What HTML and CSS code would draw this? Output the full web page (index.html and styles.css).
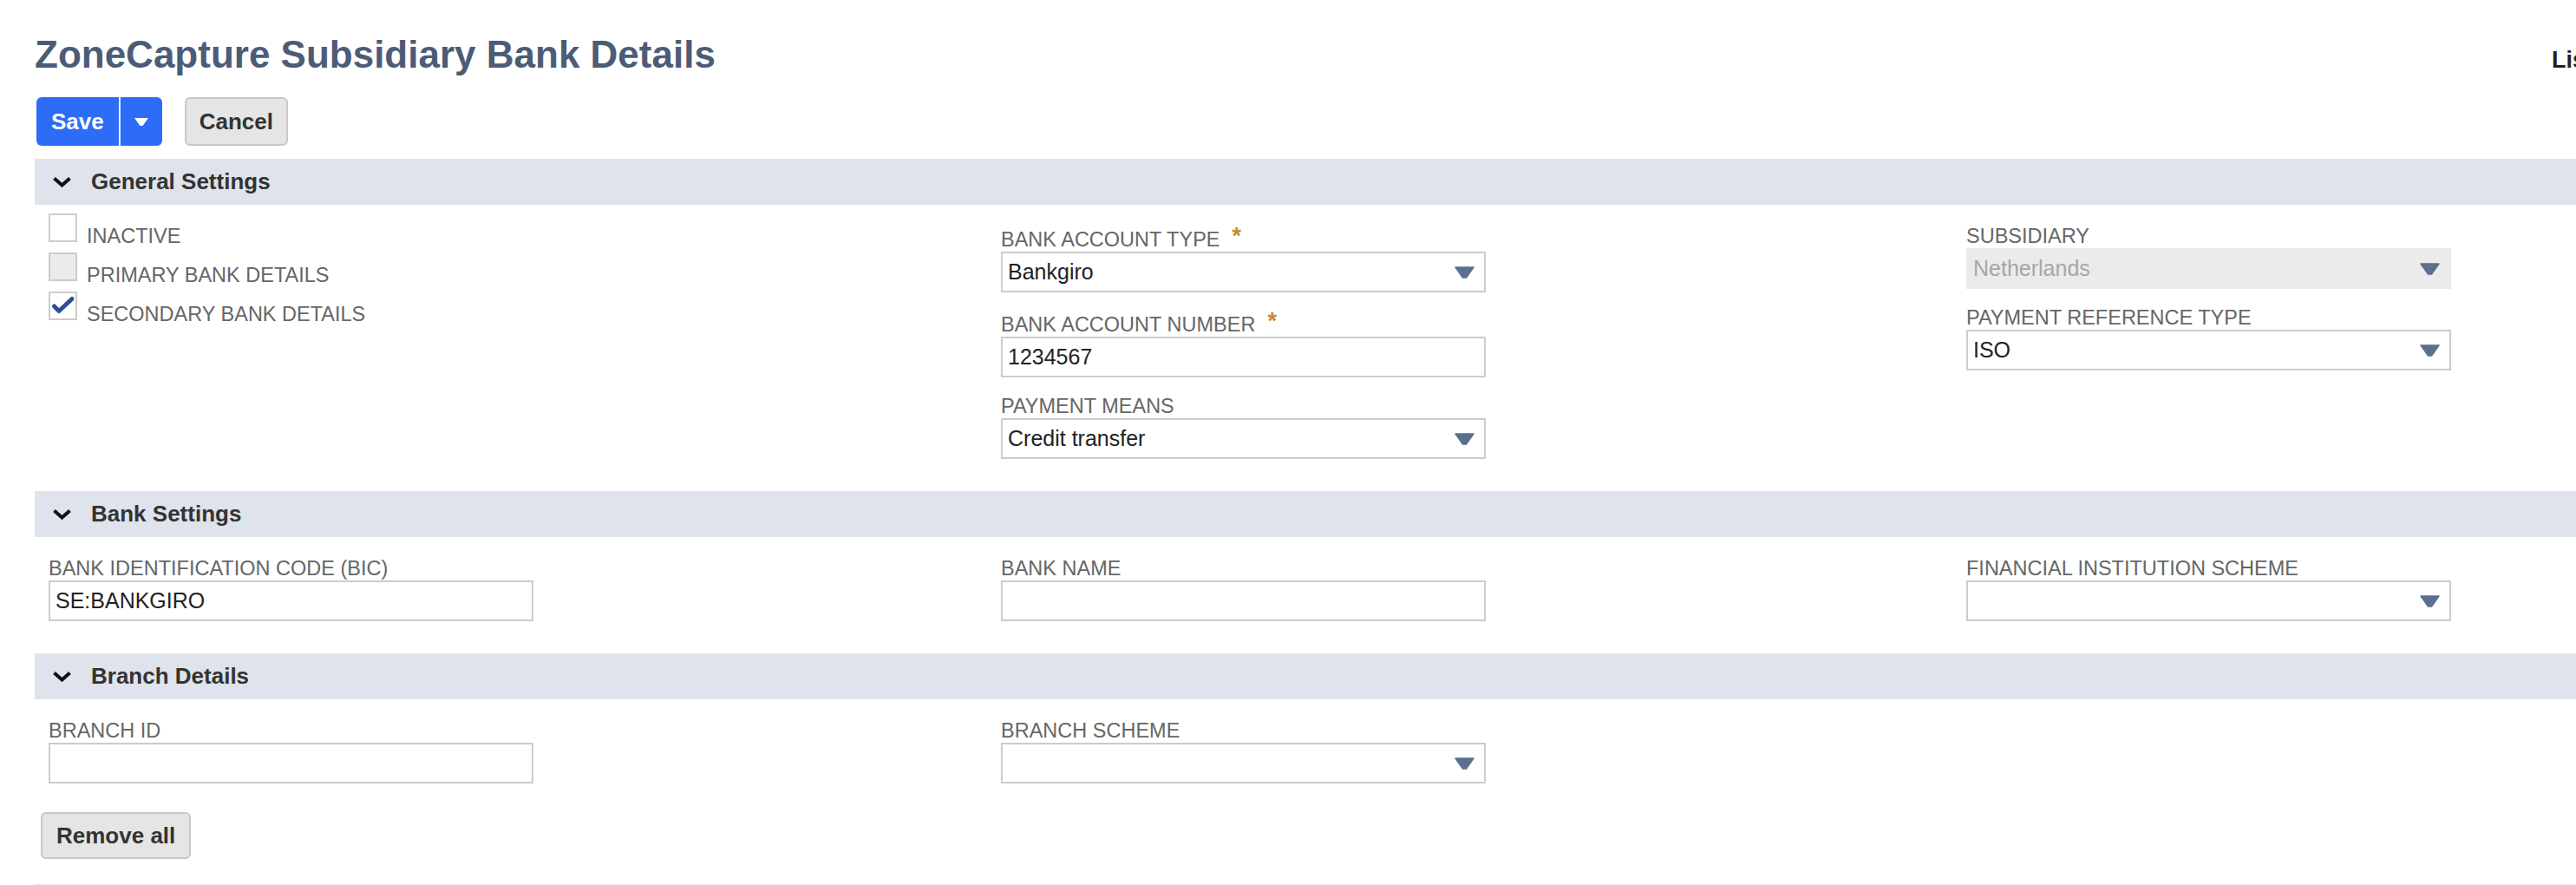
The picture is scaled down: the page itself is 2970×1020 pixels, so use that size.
FILE: index.html
```html
<!DOCTYPE html>
<html lang="en">
  <head>
    <meta charset="UTF-8" />
    <meta name="viewport" content="width=device-width, initial-scale=1.0" />
    <title>ZoneCapture Subsidiary Bank Details</title>
    <link rel="stylesheet" href="styles.css">
  </head>
  <body>
    <div class="page">
      <div class="page-header">
        <h1 class="page-title">ZoneCapture Subsidiary Bank Details</h1>
        <a class="header-link">List</a>
      </div>

      <div class="toolbar">
        <div class="btn-split">
          <button class="btn btn-primary">Save</button>
          <button class="btn btn-primary btn-menu">
            <svg width="16" height="9" viewBox="0 0 16 9"><path d="M0 0H16L9.5 9H6.5Z" fill="#fff"/></svg>
          </button>
        </div>
        <button class="btn">Cancel</button>
      </div>

      <div class="section">
        <div class="section-head">
          <svg class="chevron" width="23" height="13" viewBox="0 0 23 13"><path d="M2.5 2.5L11.5 10.5L20.5 2.5" fill="none" stroke="#111" stroke-width="4"/></svg>
          General Settings
        </div>
        <div class="section-body">
          <div class="col checks">
            <div class="check-row">
              <span class="checkbox"></span>
              <span class="check-label">INACTIVE</span>
            </div>
            <div class="check-row">
              <span class="checkbox checkbox-disabled"></span>
              <span class="check-label">PRIMARY BANK DETAILS</span>
            </div>
            <div class="check-row">
              <span class="checkbox">
                <svg width="29" height="29" viewBox="0 0 29 29"><path d="M4.5 15L10 20.5L25 6.5" fill="none" stroke="#2d4f92" stroke-width="5" stroke-linecap="round" stroke-linejoin="round"/></svg>
              </span>
              <span class="check-label">SECONDARY BANK DETAILS</span>
            </div>
          </div>

          <div class="col">
            <div class="field">
              <div class="field-label required">BANK ACCOUNT TYPE<span class="req">*</span></div>
              <div class="select">
                <span>Bankgiro</span>
                <svg class="caret" width="23" height="14" viewBox="0 0 23 14"><path d="M1 1H22L13.5 13H9.5Z" fill="#5b6f8e" stroke="#5b6f8e" stroke-width="1.5" stroke-linejoin="round"/></svg>
              </div>
            </div>
            <div class="field">
              <div class="field-label required">BANK ACCOUNT NUMBER<span class="req">*</span></div>
              <input class="input" type="text" value="1234567">
            </div>
            <div class="field">
              <div class="field-label">PAYMENT MEANS</div>
              <div class="select">
                <span>Credit transfer</span>
                <svg class="caret" width="23" height="14" viewBox="0 0 23 14"><path d="M1 1H22L13.5 13H9.5Z" fill="#5b6f8e" stroke="#5b6f8e" stroke-width="1.5" stroke-linejoin="round"/></svg>
              </div>
            </div>
          </div>

          <div class="col">
            <div class="field">
              <div class="field-label">SUBSIDIARY</div>
              <div class="select select-disabled">
                <span>Netherlands</span>
                <svg class="caret" width="23" height="14" viewBox="0 0 23 14"><path d="M1 1H22L13.5 13H9.5Z" fill="#5b6f8e" stroke="#5b6f8e" stroke-width="1.5" stroke-linejoin="round"/></svg>
              </div>
            </div>
            <div class="field">
              <div class="field-label">PAYMENT REFERENCE TYPE</div>
              <div class="select">
                <span>ISO</span>
                <svg class="caret" width="23" height="14" viewBox="0 0 23 14"><path d="M1 1H22L13.5 13H9.5Z" fill="#5b6f8e" stroke="#5b6f8e" stroke-width="1.5" stroke-linejoin="round"/></svg>
              </div>
            </div>
          </div>
        </div>
      </div>

      <div class="section">
        <div class="section-head">
          <svg class="chevron" width="23" height="13" viewBox="0 0 23 13"><path d="M2.5 2.5L11.5 10.5L20.5 2.5" fill="none" stroke="#111" stroke-width="4"/></svg>
          Bank Settings
        </div>
        <div class="section-body">
          <div class="col">
            <div class="field">
              <div class="field-label">BANK IDENTIFICATION CODE (BIC)</div>
              <input class="input" type="text" value="SE:BANKGIRO">
            </div>
          </div>
          <div class="col">
            <div class="field">
              <div class="field-label">BANK NAME</div>
              <input class="input" type="text" value="">
            </div>
          </div>
          <div class="col">
            <div class="field">
              <div class="field-label">FINANCIAL INSTITUTION SCHEME</div>
              <div class="select">
                <span></span>
                <svg class="caret" width="23" height="14" viewBox="0 0 23 14"><path d="M1 1H22L13.5 13H9.5Z" fill="#5b6f8e" stroke="#5b6f8e" stroke-width="1.5" stroke-linejoin="round"/></svg>
              </div>
            </div>
          </div>
        </div>
      </div>

      <div class="section">
        <div class="section-head">
          <svg class="chevron" width="23" height="13" viewBox="0 0 23 13"><path d="M2.5 2.5L11.5 10.5L20.5 2.5" fill="none" stroke="#111" stroke-width="4"/></svg>
          Branch Details
        </div>
        <div class="section-body section-last">
          <div class="col">
            <div class="field">
              <div class="field-label">BRANCH ID</div>
              <input class="input" type="text" value="">
            </div>
          </div>
          <div class="col">
            <div class="field">
              <div class="field-label">BRANCH SCHEME</div>
              <div class="select">
                <span></span>
                <svg class="caret" width="23" height="14" viewBox="0 0 23 14"><path d="M1 1H22L13.5 13H9.5Z" fill="#5b6f8e" stroke="#5b6f8e" stroke-width="1.5" stroke-linejoin="round"/></svg>
              </div>
            </div>
          </div>
        </div>
      </div>

      <div class="form-actions">
        <button class="btn btn-remove">Remove all</button>
      </div>
      <div class="footer-line"></div>
    </div>
  </body>
</html>
```

FILE: styles.css
```css
html,
body {
  margin: 0;
  overflow: hidden;
  background: #fff;
}

body {
  font-family: "Liberation Sans", Arial, sans-serif;
  color: #222;
}

.page {
  width: 2950px;
  padding-left: 40px;
}

.page-header {
  display: flex;
  align-items: baseline;
  padding-top: 37px;
}

.page-title {
  margin: 0;
  font-size: 44px;
  line-height: 52px;
  font-weight: bold;
  color: #4d5c76;
}

.header-link {
  margin-left: auto;
  font-size: 27px;
  font-weight: bold;
  color: #222;
}

.toolbar {
  display: flex;
  gap: 26px;
  margin-top: 23px;
  margin-bottom: 15px;
  padding-left: 2px;
}

.btn {
  font-family: "Liberation Sans", Arial, sans-serif;
  font-size: 26px;
  font-weight: bold;
  height: 56px;
  padding: 0 15px;
  border: 2px solid #c8c8c8;
  border-radius: 6px;
  background: #e5e5e5;
  color: #333;
}

.btn-split {
  display: flex;
}

.btn-primary {
  border: none;
  background: #2d6cf6;
  color: #fff;
  padding: 0 17px;
  border-radius: 6px 0 0 6px;
}

.btn-menu {
  width: 50px;
  padding: 0;
  border-left: 2px solid #e8efff;
  border-radius: 0 6px 6px 0;
  display: flex;
  align-items: center;
  justify-content: center;
}

.section-head {
  display: flex;
  align-items: center;
  gap: 22px;
  height: 53px;
  padding-left: 20px;
  background: #dfe3eb;
  font-size: 26px;
  font-weight: bold;
  color: #333;
}

.section-body {
  display: grid;
  grid-template-columns: 1098px 1113px 1fr;
  padding: 10px 0 18px 16px;
}

.section-last {
  padding-bottom: 0;
}

.col {
  padding-top: 12px;
}

.checks {
  padding-top: 0;
}

.check-row {
  display: flex;
  align-items: flex-start;
  margin-bottom: 5px;
}

.checkbox {
  box-sizing: border-box;
  width: 33px;
  height: 33px;
  border: 2px solid #ccc;
  background: #fff;
  flex-shrink: 0;
}

.checkbox svg {
  display: block;
}

.checkbox-disabled {
  background: #ebebeb;
}

.check-label {
  margin-left: 11px;
  padding-top: 12px;
  font-size: 23.5px;
  line-height: 28px;
  color: #666;
}

.field {
  margin-bottom: 19px;
}

.field-label {
  font-size: 23.5px;
  line-height: 28px;
  color: #666;
}

.field-label.required {
  padding-top: 4px;
}

.req {
  margin-left: 14px;
  font-size: 27px;
  font-weight: bold;
  line-height: 0;
  vertical-align: 3px;
  color: #c8892b;
}

.input,
.select {
  box-sizing: border-box;
  display: flex;
  align-items: center;
  width: 559px;
  height: 47px;
  margin: 0;
  border: 2px solid #ccc;
  background: #fff;
  font-family: "Liberation Sans", Arial, sans-serif;
  font-size: 25px;
  color: #222;
}

.input {
  padding: 0 6px;
  outline: none;
}

.select {
  justify-content: space-between;
  padding: 0 11px 0 6px;
}

.select-disabled {
  border-color: #ebebeb;
  background: #ebebeb;
  color: #a6a6a6;
}

.form-actions {
  margin-top: 14px;
  padding-left: 7px;
}

.btn-remove {
  height: 54px;
  padding: 0 16px;
}

.footer-line {
  margin-top: 29px;
  border-top: 2px solid #e8e8e8;
}
```
